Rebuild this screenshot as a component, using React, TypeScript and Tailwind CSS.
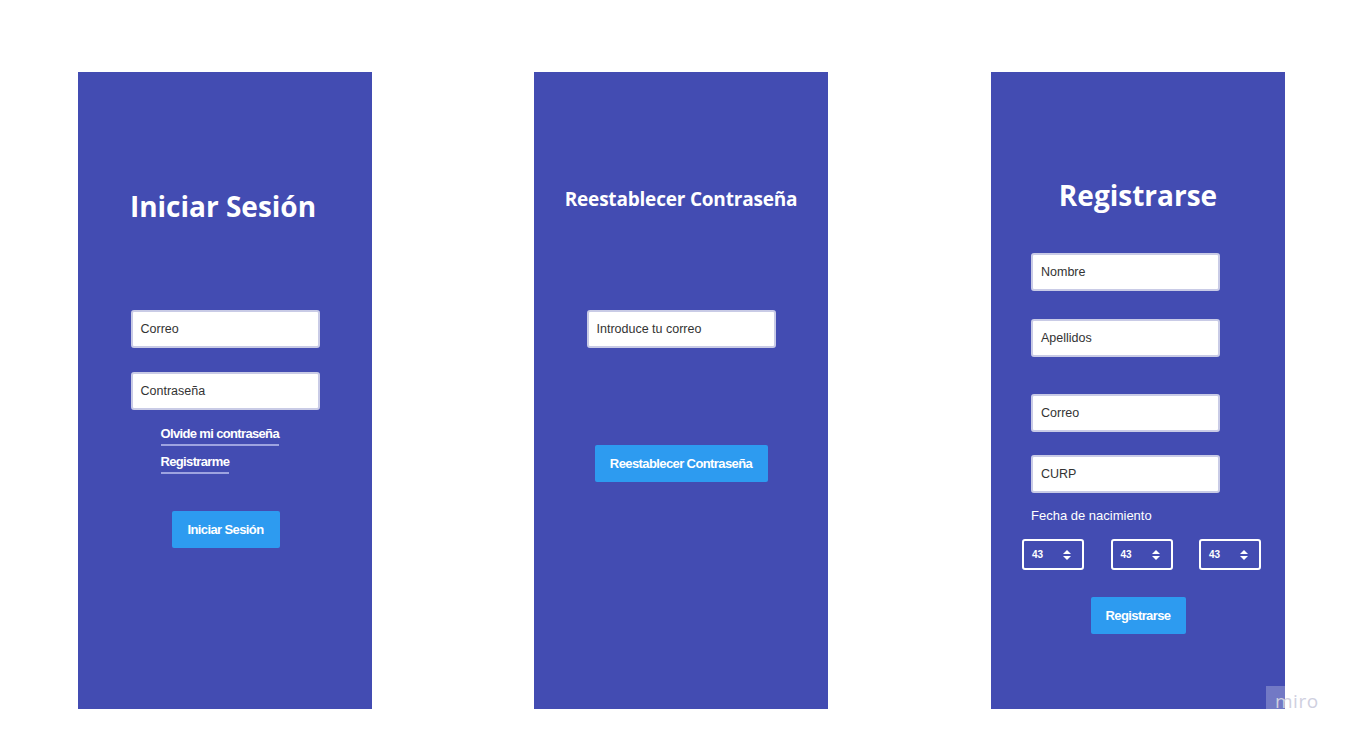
import React from "react";

const Input = ({ label }: { label: string }) => (
  <div className="w-[189px] h-[38px] bg-white rounded-[3px] border-2 border-[#c9cbe6] flex items-center pl-[8px] text-[12.5px] text-[#333] font-['Liberation_Sans',Arial,sans-serif]">
    {label}
  </div>
);

const Btn = ({ label, w }: { label: string; w: string }) => (
  <div className={`${w} h-[37px] bg-[#2d9bf0] rounded-[2px] flex items-center justify-center text-white text-[13px] font-bold tracking-[-0.6px] font-['Liberation_Sans',Arial,sans-serif]`}>
    {label}
  </div>
);

const Sel = () => (
  <div className="w-[62px] h-[31px] border-2 border-white rounded-[3px] flex items-center pl-[8px] text-white text-[10px] font-bold font-['Liberation_Sans',Arial,sans-serif]">
    <span>43</span>
    <svg width="8" height="10" viewBox="0 0 8 10" className="ml-[20px]">
      <path d="M4 0 L8 4 L0 4 Z" fill="white" />
      <path d="M0 6 L8 6 L4 10 Z" fill="white" />
    </svg>
  </div>
);

const Panel = ({ children, cls = "" }: { children: React.ReactNode; cls?: string }) => (
  <div className={`w-[294px] h-[637px] bg-[#434cb2] flex flex-col items-center shrink-0 ${cls}`}>{children}</div>
);

export default function App() {
  return (
    <div className="relative w-[1349px] h-[740px] bg-white overflow-hidden">
      <div className="flex pt-[72px] pl-[78px] gap-[162px]">
        <Panel>
          <h1 className="mt-[115px] mr-[4px] h-[38px] leading-[38px] text-[28px] font-bold text-white font-['Open_Sans',sans-serif]">
            Iniciar Sesión
          </h1>
          <div className="mt-[85px]"><Input label="Correo" /></div>
          <div className="mt-[24px]"><Input label="Contraseña" /></div>
          <div className="w-[189px] pl-[30px] flex flex-col items-start mt-[16px] text-white text-[13px] font-bold tracking-[-0.65px] font-['Liberation_Sans',Arial,sans-serif]">
            <span className="leading-[16px] pb-[2px] border-b-2 border-[#9ea3e0]">Olvide mi contraseña</span>
            <span className="mt-[8px] leading-[16px] pb-[2px] border-b-2 border-[#9ea3e0]">Registrarme</span>
          </div>
          <div className="mt-[37px] ml-[1px]"><Btn label="Iniciar Sesión" w="w-[108px]" /></div>
        </Panel>
        <Panel>
          <h1 className="mt-[113px] h-[28px] leading-[28px] text-[19px] font-bold text-white font-['Open_Sans',sans-serif] tracking-[-0.2px]">
            Reestablecer Contraseña
          </h1>
          <div className="mt-[97px]"><Input label="Introduce tu correo" /></div>
          <div className="mt-[97px]"><Btn label="Reestablecer Contraseña" w="w-[173px]" /></div>
        </Panel>
        <Panel cls="ml-[1px]">
          <h1 className="mt-[104px] h-[38px] leading-[38px] text-[28px] font-bold text-white font-['Open_Sans',sans-serif]">
            Registrarse
          </h1>
          <div className="w-[270px] flex flex-col items-start pl-[28px]">
            <div className="mt-[39px]"><Input label="Nombre" /></div>
            <div className="mt-[28px]"><Input label="Apellidos" /></div>
            <div className="mt-[37px]"><Input label="Correo" /></div>
            <div className="mt-[23px]"><Input label="CURP" /></div>
            <div className="mt-[15px] text-white text-[13px] leading-[16px] font-['Liberation_Sans',Arial,sans-serif]">
              Fecha de nacimiento
            </div>
          </div>
          <div className="w-[239px] mt-[15px] ml-[7px] flex justify-between">
            <Sel />
            <Sel />
            <Sel />
          </div>
          <div className="mt-[27px]"><Btn label="Registrarse" w="w-[95px]" /></div>
        </Panel>
      </div>
      <div className="absolute left-[1266px] top-[686px] w-[19px] h-[23px] bg-white/25" />
      <div className="absolute left-[1275px] top-[690px] text-[19px] leading-[22px] text-[#cfd0df] font-['Open_Sans',sans-serif] tracking-[0.5px]">
        miro
      </div>
    </div>
  );
}
